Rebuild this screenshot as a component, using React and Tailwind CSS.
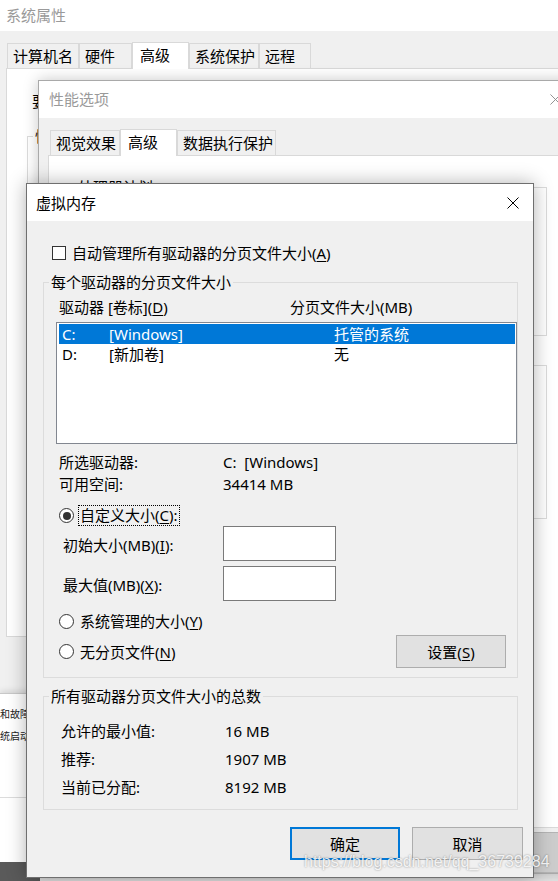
import React from "react";

const FONT = "font-['Noto_Sans','Noto_Sans_CJK_SC',sans-serif]";

function U({ children }) {
  return <span className="underline underline-offset-[2px] decoration-[1px]">{children}</span>;
}

function Radio({ checked }) {
  return (
    <span className="w-[15px] h-[15px] shrink-0 rounded-full border border-[#333] bg-white flex items-center justify-center">
      {checked && <span className="w-[8px] h-[8px] rounded-full bg-[#333]" />}
    </span>
  );
}

function CloseX({ color = "#000", size = 12 }) {
  return (
    <svg width={size} height={size} viewBox="0 0 12 12" className="shrink-0">
      <path d="M0.5 0.5 L11.5 11.5 M11.5 0.5 L0.5 11.5" stroke={color} strokeWidth="1" fill="none" />
    </svg>
  );
}

function Tab({ label, w, active }) {
  if (active) {
    return (
      <div
        className="relative z-10 h-[27px] -mb-[1px] bg-white border-x border-t border-[#d9d9d9] flex items-start pl-[7px] pt-[1px]"
        style={{ width: w }}
      >
        {label}
      </div>
    );
  }
  return (
    <div
      className="h-[25px] bg-[#f0f0f0] border-x border-t border-[#d9d9d9] flex items-center pl-[5px]"
      style={{ width: w }}
    >
      {label}
    </div>
  );
}

// background window: 系统属性
function SystemProps() {
  return (
    <div className="absolute left-0 top-0 w-[640px] h-[693px] bg-[#f0f0f0]">
      <div className="h-[31px] bg-white flex items-center pl-[6px] text-[15px] text-[#9a9a9a]">系统属性</div>
      <div className="h-[26px] mt-[11px] ml-[7px] flex items-end text-[15px] text-black">
        <Tab label="计算机名" w={72} />
        <Tab label="硬件" w={53} />
        <Tab label="高级" w={57} active />
        <Tab label="系统保护" w={70} />
        <Tab label="远程" w={52} />
      </div>
      <div className="ml-[6px] h-[569px] bg-white border border-[#d9d9d9] pt-[22px] text-[15px]">
        <div className="h-[20px] pl-[25px] flex items-center">要</div>
        <fieldset className="ml-[20px] mt-[15px] w-[520px] h-[300px] border border-[#dcdcdc]">
          <legend className="ml-[5px] px-[2px] leading-[20px]">性</legend>
        </fieldset>
      </div>
    </div>
  );
}

// background window: 性能选项
function PerfOptions() {
  return (
    <div className="absolute left-[38px] top-[80px] w-[600px] h-[794px] bg-[#f0f0f0] border border-[#a9a9a9] shadow-[0_0_14px_rgba(0,0,0,0.22)]">
      <div className="h-[37px] bg-white flex items-center pl-[10px] text-[15px] text-[#9a9a9a]">
        <span className="w-[501px]">性能选项</span>
        <CloseX color="#8a8a8a" size={11} />
      </div>
      <div className="h-[27px] mt-[10px] ml-[11px] flex items-end text-[15px] text-black">
        <Tab label="视觉效果" w={70} />
        <Tab label="高级" w={57} active />
        <Tab label="数据执行保护" w={99} />
      </div>
      <div className="ml-[9px] h-[673px] bg-white border border-[#d9d9d9] pt-[21px] text-[15px]">
        <fieldset className="ml-[12px] w-[486px] h-[159px] border border-[#dcdcdc]">
          <legend className="ml-[14px] px-[2px] leading-[20px]">处理器计划</legend>
        </fieldset>
        <fieldset className="ml-[12px] mt-[29px] w-[486px] h-[154px] border border-[#dcdcdc]" />
      </div>
      <div className="mt-[4px] ml-[494px] w-[40px] h-[41px] bg-[#cccccc] border border-[#b4b4b4]" />
    </div>
  );
}

function VirtualMemory() {
  const drives = [
    { d: "C:", label: "[Windows]", size: "托管的系统", selected: true },
    { d: "D:", label: "[新加卷]", size: "无" },
  ];
  return (
    <div className="absolute left-[26px] top-[183px] w-[508px] bg-[#f0f0f0] border border-[#6f6f6f] shadow-[0_0_18px_rgba(0,0,0,0.3)] text-[15px] leading-[20px] text-black">
      <div className="h-[37px] bg-white flex items-center justify-between pl-[9px] pr-[14px]">
        <span>虚拟内存</span>
        <CloseX />
      </div>

      <div className="pl-[16px] pr-[15px] pt-[22px] pb-[17px]">
        <div className="h-[20px] flex items-center pl-[9px] gap-[6px]">
          <span className="w-[14px] h-[14px] border border-[#333] bg-white shrink-0" />
          <span>
            自动管理所有驱动器的分页文件大小(<U>A</U>)
          </span>
        </div>

        <fieldset className="mt-[9px] border border-[#dcdcdc]">
          <legend className="ml-[5px] px-[2px] leading-[20px]">每个驱动器的分页文件大小</legend>
          <div className="pl-[12px] pb-[9px]">
            <div className="h-[30px] flex items-center pl-[3px]">
              <span className="w-[231px]">
                驱动器 [卷标](<U>D</U>)
              </span>
              <span>分页文件大小(MB)</span>
            </div>

            <div className="h-[122px] bg-white border border-[#828790] p-[1px]">
              {drives.map((r) => (
                <div
                  key={r.d}
                  className={
                    "h-[20px] flex items-center pl-[3px] ml-[1px] " +
                    (r.selected ? "bg-[#0078d7] text-white" : "")
                  }
                >
                  <span className="w-[47px]">{r.d}</span>
                  <span className="w-[225px]">{r.label}</span>
                  <span>{r.size}</span>
                </div>
              ))}
            </div>

            <div className="mt-[7px] h-[22px] flex items-center pl-[3px]">
              <span className="w-[164px]">所选驱动器:</span>
              <span>C:&nbsp;&nbsp;[Windows]</span>
            </div>
            <div className="h-[22px] flex items-center pl-[3px]">
              <span className="w-[164px]">可用空间:</span>
              <span>34414 MB</span>
            </div>

            <div className="mt-[10px] h-[21px] flex items-center pl-[3px] gap-[4px]">
              <Radio checked />
              <span className="px-[1px] border border-dotted border-black leading-[19px]">
                自定义大小(<U>C</U>):
              </span>
            </div>

            <div className="h-[35px] flex items-center pl-[7px]">
              <span className="w-[160px] pt-[2px]">
                初始大小(MB)(<U>I</U>):
              </span>
              <span className="w-[113px] h-[35px] bg-white border border-[#7a7a7a]" />
            </div>
            <div className="mt-[5px] h-[35px] flex items-center pl-[7px]">
              <span className="w-[160px] pt-[2px]">
                最大值(MB)(<U>X</U>):
              </span>
              <span className="w-[113px] h-[35px] bg-white border border-[#7a7a7a]" />
            </div>

            <div className="mt-[9px] h-[22px] flex items-center pl-[3px] gap-[6px]">
              <Radio />
              <span>
                系统管理的大小(<U>Y</U>)
              </span>
            </div>
            <div className="mt-[3px] h-[33px] flex items-center justify-between">
              <div className="flex items-center pl-[3px] gap-[6px]">
                <Radio />
                <span>
                  无分页文件(<U>N</U>)
                </span>
              </div>
              <button className="mr-[11px] w-[110px] h-[33px] bg-[#e1e1e1] border border-[#adadad] flex items-center justify-center">
                设置(<U>S</U>)
              </button>
            </div>
          </div>
        </fieldset>

        <fieldset className="mt-[8px] border border-[#dcdcdc]">
          <legend className="ml-[5px] px-[2px] leading-[20px]">所有驱动器分页文件大小的总数</legend>
          <div className="pt-[11px] pb-[8px] pl-[17px]">
            {[
              ["允许的最小值:", "16 MB"],
              ["推荐:", "1907 MB"],
              ["当前已分配:", "8192 MB"],
            ].map(([k, v]) => (
              <div key={k} className="h-[28px] flex items-center">
                <span className="w-[164px]">{k}</span>
                <span>{v}</span>
              </div>
            ))}
          </div>
        </fieldset>

        <div className="mt-[17px] -mr-[5px] flex justify-end gap-[12px]">
          <button className="w-[110px] h-[33px] bg-[#e1e1e1] border-2 border-[#0078d7] flex items-center justify-center">
            确定
          </button>
          <button className="w-[111px] h-[33px] bg-[#e1e1e1] border border-[#adadad] flex items-center justify-center">
            取消
          </button>
        </div>
      </div>
    </div>
  );
}

export default function App() {
  return (
    <div className={"relative w-[558px] h-[881px] overflow-hidden bg-[#e6e6e6] text-black " + FONT}>
      <SystemProps />

      {/* window peeking out below 系统属性 */}
      <div className="absolute left-0 top-[693px] w-[40px] h-[169px] bg-white border-t border-[#c8c8c8] shadow-[0_-2px_6px_rgba(0,0,0,0.12)]">
        <div className="h-[104px] border-b border-[#dcdcdc] pt-[14px] text-[10px] leading-[12px] text-[#222] whitespace-nowrap overflow-hidden">
          <div>和故障</div>
          <div className="mt-[10px]">统启动、</div>
        </div>
      </div>
      <div className="absolute left-0 top-[862px] w-[40px] h-[19px] bg-[#5a5a5a]" />

      <PerfOptions />
      <VirtualMemory />

      <div className="absolute left-[304px] top-[852px] text-[16px] leading-[20px] font-['Liberation_Sans',sans-serif] text-white/85 [text-shadow:0_0_2px_rgba(0,0,0,0.45)] pointer-events-none">
        https://blog.csdn.net/qq_36739284
      </div>
    </div>
  );
}
